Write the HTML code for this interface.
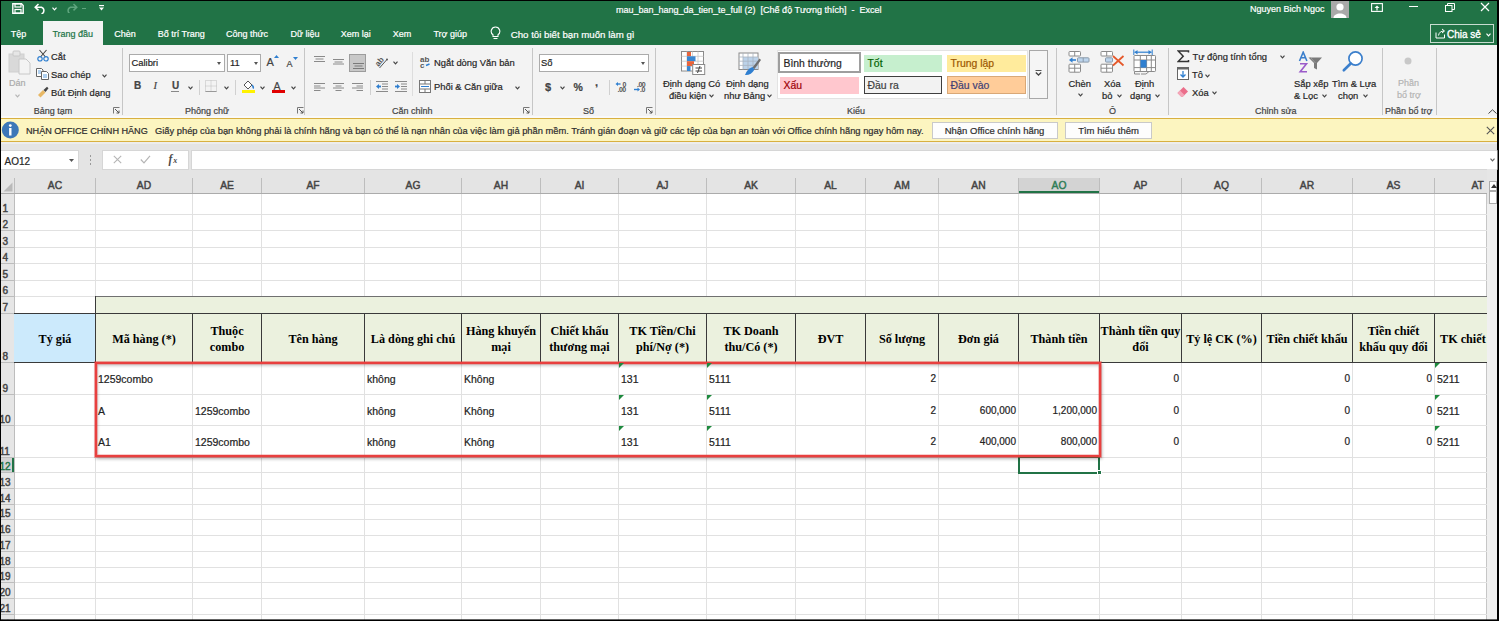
<!DOCTYPE html><html><head><meta charset="utf-8"><style>
*{margin:0;padding:0;box-sizing:border-box}
html,body{width:1499px;height:621px;overflow:hidden;background:#000}
body{position:relative;font-family:"Liberation Sans",sans-serif;color:#262626}
div,svg{position:absolute}
.t{white-space:nowrap;line-height:1;-webkit-text-stroke:0.2px currentColor}
</style></head><body>
<div style="left:1px;top:1px;width:1496px;height:618px;background:#F3F3F3"></div>
<div style="left:1px;top:1px;width:1496px;height:44px;background:#217346"></div>
<svg style="left:12px;top:3px;" width="12" height="11" viewBox="0 0 12 11"><path d="M0.8 0.8 H9.5 L11.2 2.5 V10.2 H0.8 Z" fill="none" stroke="#fff" stroke-width="1.4"/><rect x="3" y="0.8" width="6" height="3.2" fill="none" stroke="#fff" stroke-width="1.2"/><rect x="3" y="6.5" width="6" height="3.7" fill="none" stroke="#fff" stroke-width="1.2"/></svg>
<svg style="left:34px;top:3px;" width="13" height="11" viewBox="0 0 13 11"><path d="M4.5 1 L1.2 4.2 L4.5 7.4 M1.5 4.2 H7.5 A3.6 3.6 0 0 1 7.5 11" fill="none" stroke="#fff" stroke-width="1.5"/></svg>
<svg style="left:51.5px;top:6.5px;" width="5" height="4" viewBox="0 0 5 4"><path d="M0.5 0.7 L2.5 2.8 L4.5 0.7" fill="none" stroke="#fff" stroke-width="1.2"/></svg>
<svg style="left:65px;top:3px;" width="13" height="10" viewBox="0 0 13 10"><path d="M8.5 1 L11.8 4.2 L8.5 7.4 M11.5 4.2 H5.5 A3.6 3.6 0 0 0 5.5 11" fill="none" stroke="#5FA57E" stroke-width="1.5"/></svg>
<div style="left:82px;top:8px;width:4px;height:1px;background:#5FA57E"></div>
<svg style="left:99px;top:5px;" width="5" height="6" viewBox="0 0 5 6"><rect x="0" y="0" width="5" height="1.2" fill="#fff"/><path d="M0 2.6 H5 L2.5 5.4 Z" fill="#fff"/></svg>
<div class="t" style="left:616px;top:6.30px;font-size:9px;color:#fff;font-weight:normal;font-family:'Liberation Sans',sans-serif;">mau_ban_hang_da_tien_te_full (2)&nbsp; [Chế độ Tương thích]&nbsp; -&nbsp; Excel</div>
<div class="t" style="left:1250px;top:5.10px;font-size:9px;color:#fff;font-weight:normal;font-family:'Liberation Sans',sans-serif;">Nguyen Bich Ngoc</div>
<div style="left:1331px;top:1px;width:18px;height:16.5px;background:#A9A9A9;overflow:hidden"><svg style="left:0;top:0" width="18" height="17"><circle cx="9" cy="6" r="3.6" fill="#fff"/><path d="M2.5 17 C2.5 11 15.5 11 15.5 17 Z" fill="#fff"/></svg></div>
<svg style="left:1371px;top:3px;" width="12" height="9" viewBox="0 0 12 9"><rect x="0.6" y="0.6" width="10.8" height="7.8" fill="none" stroke="#fff" stroke-width="1.1"/><path d="M6 2.5 L3.5 5 H8.5 Z" fill="#fff"/><rect x="5.4" y="4.5" width="1.2" height="3" fill="#fff"/></svg>
<div style="left:1409px;top:6px;width:9px;height:1px;background:#fff"></div>
<svg style="left:1445px;top:3px;" width="10" height="9" viewBox="0 0 10 9"><rect x="0.5" y="2.5" width="6.5" height="6" fill="none" stroke="#fff" stroke-width="1"/><path d="M2.5 2.5 V0.5 H9.5 V6.5 H7" fill="none" stroke="#fff" stroke-width="1"/></svg>
<svg style="left:1480px;top:2px;" width="10" height="10" viewBox="0 0 10 10"><path d="M1 1 L9 9 M9 1 L1 9" stroke="#fff" stroke-width="1.2"/></svg>
<div style="left:43px;top:21px;width:60px;height:24px;background:#F3F3F3"></div>
<div class="t" style="left:10.7px;top:30.30px;font-size:9px;color:#fff;font-weight:normal;font-family:'Liberation Sans',sans-serif;">Tệp</div>
<div class="t" style="left:52.4px;top:30.30px;font-size:9px;color:#217346;font-weight:normal;font-family:'Liberation Sans',sans-serif;">Trang đầu</div>
<div class="t" style="left:114.3px;top:30.30px;font-size:9px;color:#fff;font-weight:normal;font-family:'Liberation Sans',sans-serif;">Chèn</div>
<div class="t" style="left:157.7px;top:30.30px;font-size:9px;color:#fff;font-weight:normal;font-family:'Liberation Sans',sans-serif;">Bố trí Trang</div>
<div class="t" style="left:226px;top:30.30px;font-size:9px;color:#fff;font-weight:normal;font-family:'Liberation Sans',sans-serif;">Công thức</div>
<div class="t" style="left:290.6px;top:30.30px;font-size:9px;color:#fff;font-weight:normal;font-family:'Liberation Sans',sans-serif;">Dữ liệu</div>
<div class="t" style="left:340.8px;top:30.30px;font-size:9px;color:#fff;font-weight:normal;font-family:'Liberation Sans',sans-serif;">Xem lại</div>
<div class="t" style="left:392.8px;top:30.30px;font-size:9px;color:#fff;font-weight:normal;font-family:'Liberation Sans',sans-serif;">Xem</div>
<div class="t" style="left:433.4px;top:30.30px;font-size:9px;color:#fff;font-weight:normal;font-family:'Liberation Sans',sans-serif;">Trợ giúp</div>
<div class="t" style="left:510.7px;top:30.09px;font-size:9.7px;color:#fff;font-weight:normal;font-family:'Liberation Sans',sans-serif;">Cho tôi biết bạn muốn làm gì</div>
<svg style="left:490px;top:26px;" width="11" height="14" viewBox="0 0 11 14"><path d="M5.5 1 A4.3 4.3 0 0 1 8 8.8 V10.5 H3 V8.8 A4.3 4.3 0 0 1 5.5 1 Z" fill="none" stroke="#fff" stroke-width="1.1"/><path d="M3.5 12.5 H7.5" stroke="#fff" stroke-width="1.1"/></svg>
<div style="left:1430px;top:24px;width:64px;height:19px;border:1px solid #C8DCD0"></div>
<svg style="left:1435px;top:28px;" width="11" height="11" viewBox="0 0 11 11"><path d="M1 4.5 V10 H9.5 V6.5" fill="none" stroke="#fff" stroke-width="1"/><path d="M3.5 7.5 C4 4.5 6 3 9 3 M7 1 L9.5 3 L7 5" fill="none" stroke="#fff" stroke-width="1"/></svg>
<div class="t" style="left:1447px;top:29.80px;font-size:10px;color:#fff;font-weight:normal;font-family:'Liberation Sans',sans-serif;-webkit-text-stroke:0.35px currentColor">Chia sẻ</div>
<svg style="left:1486.0px;top:32.5px;" width="5" height="4" viewBox="0 0 5 4"><path d="M0.5 0.7 L2.5 2.8 L4.5 0.7" fill="none" stroke="#fff" stroke-width="1.2"/></svg>
<div style="left:122px;top:48px;width:1px;height:67px;background:#C6C6C6"></div>
<div style="left:304px;top:48px;width:1px;height:67px;background:#C6C6C6"></div>
<div style="left:532px;top:48px;width:1px;height:67px;background:#C6C6C6"></div>
<div style="left:655px;top:48px;width:1px;height:67px;background:#C6C6C6"></div>
<div style="left:1056px;top:48px;width:1px;height:67px;background:#C6C6C6"></div>
<div style="left:1168px;top:48px;width:1px;height:67px;background:#C6C6C6"></div>
<div style="left:1382px;top:48px;width:1px;height:67px;background:#C6C6C6"></div>
<div style="left:1436px;top:48px;width:1px;height:67px;background:#C6C6C6"></div>
<div class="t" style="left:33.8px;top:107.10px;font-size:9px;color:#444;font-weight:normal;font-family:'Liberation Sans',sans-serif;">Bảng tạm</div>
<div class="t" style="left:185px;top:107.10px;font-size:9px;color:#444;font-weight:normal;font-family:'Liberation Sans',sans-serif;">Phông chữ</div>
<div class="t" style="left:392px;top:107.10px;font-size:9px;color:#444;font-weight:normal;font-family:'Liberation Sans',sans-serif;">Căn chỉnh</div>
<div class="t" style="left:583px;top:107.10px;font-size:9px;color:#444;font-weight:normal;font-family:'Liberation Sans',sans-serif;">Số</div>
<div class="t" style="left:847px;top:107.10px;font-size:9px;color:#444;font-weight:normal;font-family:'Liberation Sans',sans-serif;">Kiểu</div>
<div class="t" style="left:1109px;top:107.10px;font-size:9px;color:#444;font-weight:normal;font-family:'Liberation Sans',sans-serif;">Ô</div>
<div class="t" style="left:1255px;top:107.10px;font-size:9px;color:#444;font-weight:normal;font-family:'Liberation Sans',sans-serif;">Chỉnh sửa</div>
<div class="t" style="left:1385px;top:107.10px;font-size:9px;color:#444;font-weight:normal;font-family:'Liberation Sans',sans-serif;">Phần bổ trợ</div>
<svg style="left:113px;top:107px;" width="7" height="7" viewBox="0 0 7 7"><path d="M0.5 6.5 V0.5 H6.5" fill="none" stroke="#777" stroke-width="1"/><path d="M2 2 L6 6 M6 3.5 V6 H3.5" fill="none" stroke="#555" stroke-width="1"/></svg>
<svg style="left:297px;top:107px;" width="7" height="7" viewBox="0 0 7 7"><path d="M0.5 6.5 V0.5 H6.5" fill="none" stroke="#777" stroke-width="1"/><path d="M2 2 L6 6 M6 3.5 V6 H3.5" fill="none" stroke="#555" stroke-width="1"/></svg>
<svg style="left:523px;top:107px;" width="7" height="7" viewBox="0 0 7 7"><path d="M0.5 6.5 V0.5 H6.5" fill="none" stroke="#777" stroke-width="1"/><path d="M2 2 L6 6 M6 3.5 V6 H3.5" fill="none" stroke="#555" stroke-width="1"/></svg>
<svg style="left:646px;top:107px;" width="7" height="7" viewBox="0 0 7 7"><path d="M0.5 6.5 V0.5 H6.5" fill="none" stroke="#777" stroke-width="1"/><path d="M2 2 L6 6 M6 3.5 V6 H3.5" fill="none" stroke="#555" stroke-width="1"/></svg>
<svg style="left:8px;top:50px;" width="24" height="25" viewBox="0 0 24 25"><rect x="1" y="4" width="15" height="18" fill="#D9D9D9" stroke="#CFCFCF"/><rect x="5" y="1" width="7" height="5" rx="1" fill="#E6E6E6" stroke="#C8C8C8"/><path d="M11 9 H18 L22 13 V24 H11 Z" fill="#F3F3F3" stroke="#C8C8C8"/></svg>
<div class="t" style="left:9px;top:78.80px;font-size:9px;color:#ABABAB;font-weight:normal;font-family:'Liberation Sans',sans-serif;">Dán</div>
<svg style="left:15.0px;top:93.5px;" width="5" height="4" viewBox="0 0 5 4"><path d="M0.5 0.7 L2.5 2.8 L4.5 0.7" fill="none" stroke="#B5B5B5" stroke-width="1.2"/></svg>
<svg style="left:37px;top:49px;" width="12" height="13" viewBox="0 0 12 13"><path d="M2.5 1 L8.5 8 M9.5 1 L3.5 8" stroke="#444" stroke-width="1.1"/><circle cx="3" cy="9.8" r="2.2" fill="none" stroke="#2F7FD0" stroke-width="1.2"/><circle cx="9" cy="9.8" r="2.2" fill="none" stroke="#2F7FD0" stroke-width="1.2"/></svg>
<div class="t" style="left:51px;top:52.38px;font-size:9.4px;color:#262626;font-weight:normal;font-family:'Liberation Sans',sans-serif;">Cắt</div>
<svg style="left:36px;top:68px;" width="13" height="12" viewBox="0 0 13 12"><path d="M0.5 0.5 H5.5 L7 2 V8.5 H0.5 Z" fill="#fff" stroke="#666"/><path d="M5.5 3.5 H10.5 L12.5 5.5 V11.5 H5.5 Z" fill="#fff" stroke="#666"/><path d="M2 3 H5 M2 5 H5 M7 7 H11 M7 9 H11" stroke="#3B8AD8" stroke-width="0.8"/></svg>
<div class="t" style="left:51px;top:70.38px;font-size:9.4px;color:#262626;font-weight:normal;font-family:'Liberation Sans',sans-serif;">Sao chép</div>
<svg style="left:101.5px;top:73.5px;" width="5" height="4" viewBox="0 0 5 4"><path d="M0.5 0.7 L2.5 2.8 L4.5 0.7" fill="none" stroke="#444" stroke-width="1.2"/></svg>
<svg style="left:37px;top:86px;" width="12" height="12" viewBox="0 0 12 12"><path d="M1 9 L6 4 L8.5 6.5 L3.5 11.5 Z" fill="#E8B865"/><path d="M6.5 4 L10 0.8 L11.5 2.3 L8.5 6" fill="#444"/></svg>
<div class="t" style="left:51px;top:88.38px;font-size:9.4px;color:#262626;font-weight:normal;font-family:'Liberation Sans',sans-serif;">Bút Định dạng</div>
<div style="left:129px;top:53.5px;width:96px;height:18px;background:#fff;border:1px solid #ABABAB"></div>
<div class="t" style="left:131.5px;top:58.48px;font-size:9.4px;color:#262626;font-weight:normal;font-family:'Liberation Sans',sans-serif;">Calibri</div>
<svg style="left:217px;top:62px;" width="4" height="3" viewBox="0 0 4 3"><path d="M0 0 L4 0 L2.0 3 Z" fill="#555"/></svg>
<div style="left:227px;top:53.5px;width:34px;height:18px;background:#fff;border:1px solid #ABABAB"></div>
<div class="t" style="left:230px;top:58.48px;font-size:9.4px;color:#262626;font-weight:normal;font-family:'Liberation Sans',sans-serif;">11</div>
<svg style="left:254px;top:62px;" width="4" height="3" viewBox="0 0 4 3"><path d="M0 0 L4 0 L2.0 3 Z" fill="#555"/></svg>
<div class="t" style="left:266.5px;top:57.20px;font-size:11px;color:#444;font-weight:normal;font-family:'Liberation Sans',sans-serif;">A</div>
<svg style="left:274px;top:55px;" width="5" height="3" viewBox="0 0 5 3"><path d="M0 3 L2.5 0 L5 3 Z" fill="#2F7FD0"/></svg>
<div class="t" style="left:286.5px;top:59.60px;font-size:9px;color:#444;font-weight:normal;font-family:'Liberation Sans',sans-serif;">A</div>
<svg style="left:293px;top:57px;" width="5" height="3" viewBox="0 0 5 3"><path d="M0 0 L2.5 3 L5 0 Z" fill="#2F7FD0"/></svg>
<div class="t" style="left:134px;top:81.30px;font-size:10px;color:#444;font-weight:bold;font-family:'Liberation Sans',sans-serif;">B</div>
<div class="t" style="left:153.5px;top:81.15px;font-size:10.5px;color:#444;font-weight:normal;font-family:'Liberation Serif',serif;"><i>I</i></div>
<div class="t" style="left:172px;top:80.80px;font-size:10px;color:#444;font-weight:bold;font-family:'Liberation Sans',sans-serif;">U</div>
<div style="left:171px;top:91px;width:8px;height:1px;background:#888"></div>
<svg style="left:187.5px;top:85.5px;" width="5" height="4" viewBox="0 0 5 4"><path d="M0.5 0.7 L2.5 2.8 L4.5 0.7" fill="none" stroke="#444" stroke-width="1.2"/></svg>
<div style="left:199px;top:80px;width:1px;height:15px;background:#D0D0D0"></div>
<svg style="left:205px;top:80px;" width="12" height="12" viewBox="0 0 12 12"><rect x="0.5" y="0.5" width="11" height="11" fill="none" stroke="#BDBDBD" stroke-dasharray="1 1"/><path d="M6 0.5 V11.5 M0.5 6 H11.5" stroke="#BDBDBD" stroke-dasharray="1 1"/><path d="M0.5 11.5 H11.5" stroke="#999"/></svg>
<svg style="left:223.5px;top:85.5px;" width="5" height="4" viewBox="0 0 5 4"><path d="M0.5 0.7 L2.5 2.8 L4.5 0.7" fill="none" stroke="#444" stroke-width="1.2"/></svg>
<div style="left:235px;top:80px;width:1px;height:15px;background:#D0D0D0"></div>
<svg style="left:241px;top:79px;" width="15" height="14" viewBox="0 0 15 14"><path d="M3 6 L7 2 L11 6 L7 10 Z" fill="#fff" stroke="#555"/><path d="M11 6 Q13 8 12 9.5" fill="none" stroke="#2F7FD0" stroke-width="1.5"/><rect x="1" y="11" width="13" height="3" fill="#FFF200"/></svg>
<svg style="left:259.5px;top:85.5px;" width="5" height="4" viewBox="0 0 5 4"><path d="M0.5 0.7 L2.5 2.8 L4.5 0.7" fill="none" stroke="#444" stroke-width="1.2"/></svg>
<div class="t" style="left:273.5px;top:81.35px;font-size:10.5px;color:#444;font-weight:normal;font-family:'Liberation Sans',sans-serif;">A</div>
<div style="left:272px;top:90px;width:13px;height:2.7px;background:#E00000"></div>
<svg style="left:290.5px;top:85.5px;" width="5" height="4" viewBox="0 0 5 4"><path d="M0.5 0.7 L2.5 2.8 L4.5 0.7" fill="none" stroke="#444" stroke-width="1.2"/></svg>
<svg style="left:314px;top:55px;" width="12" height="8" viewBox="0 0 12 8"><path d="M0 1.5 H11" stroke="#8A8A8A"/><path d="M1.5 4.0 H9.5" stroke="#8A8A8A"/><path d="M0 6.5 H11" stroke="#8A8A8A"/></svg>
<svg style="left:333px;top:58px;" width="12" height="8" viewBox="0 0 12 8"><path d="M0 1.5 H11" stroke="#8A8A8A"/><path d="M1.5 4.0 H9.5" stroke="#8A8A8A"/><path d="M0 6.0 H11" stroke="#8A8A8A"/></svg>
<div style="left:349px;top:53.7px;width:17px;height:18.2px;background:#C8C8C8;border:1px solid #9C9C9C"></div>
<svg style="left:352.5px;top:62px;" width="12" height="8" viewBox="0 0 12 8"><path d="M0 1.5 H11" stroke="#7A7A7A"/><path d="M1.5 4.0 H9.5" stroke="#7A7A7A"/><path d="M0 6.5 H11" stroke="#7A7A7A"/></svg>
<svg style="left:375px;top:55px;" width="15" height="15" viewBox="0 0 15 15"><text x="0" y="0" font-size="8" font-weight="bold" font-family="Liberation Sans" fill="#555" transform="translate(3.5 12) rotate(-50)">ab</text><path d="M4.5 13 L11.5 5" stroke="#555" stroke-width="1"/><circle cx="12" cy="4.5" r="1" fill="#555"/></svg>
<svg style="left:392.5px;top:60.5px;" width="5" height="4" viewBox="0 0 5 4"><path d="M0.5 0.7 L2.5 2.8 L4.5 0.7" fill="none" stroke="#444" stroke-width="1.2"/></svg>
<div style="left:412px;top:52px;width:1px;height:44px;background:#DDDDDD"></div>
<svg style="left:419px;top:55px;" width="14" height="14" viewBox="0 0 14 14"><text x="1" y="7" font-size="8" font-weight="bold" font-family="Liberation Sans" fill="#555">ab</text><text x="1" y="13" font-size="8" font-weight="bold" font-family="Liberation Sans" fill="#555">c</text><path d="M7 10.5 L10.5 9" stroke="#2F7FD0" stroke-width="1.6"/></svg>
<div class="t" style="left:434px;top:57.78px;font-size:9.4px;color:#262626;font-weight:normal;font-family:'Liberation Sans',sans-serif;">Ngắt dòng Văn bản</div>
<svg style="left:314px;top:82px;" width="12" height="10" viewBox="0 0 12 10"><path d="M0 1.5 H11" stroke="#8A8A8A"/><path d="M0 4.0 H6.5" stroke="#8A8A8A"/><path d="M0 6.0 H11" stroke="#8A8A8A"/><path d="M0 8.5 H6.5" stroke="#8A8A8A"/></svg>
<svg style="left:333px;top:82px;" width="12" height="10" viewBox="0 0 12 10"><path d="M0 1.5 H11" stroke="#8A8A8A"/><path d="M2.5 4.0 H8.5" stroke="#8A8A8A"/><path d="M0 6.0 H11" stroke="#8A8A8A"/><path d="M2.5 8.5 H8.5" stroke="#8A8A8A"/></svg>
<svg style="left:352px;top:82px;" width="12" height="10" viewBox="0 0 12 10"><path d="M0 1.5 H11" stroke="#8A8A8A"/><path d="M4.5 4.0 H11" stroke="#8A8A8A"/><path d="M0 6.0 H11" stroke="#8A8A8A"/><path d="M4.5 8.5 H11" stroke="#8A8A8A"/></svg>
<div style="left:370px;top:80px;width:1px;height:15px;background:#D0D0D0"></div>
<svg style="left:376px;top:81px;" width="13" height="11" viewBox="0 0 13 11"><path d="M0 0.5 H12 M6 3 H12 M6 5.5 H12 M6 8 H12 M0 10.5 H12" stroke="#8A8A8A"/><path d="M0 5.5 L3 3 V8 Z" fill="#2F7FD0"/><rect x="2.5" y="4.6" width="2.5" height="1.8" fill="#2F7FD0"/></svg>
<svg style="left:394.5px;top:81px;" width="13" height="11" viewBox="0 0 13 11"><path d="M0 0.5 H12 M6 3 H12 M6 5.5 H12 M6 8 H12 M0 10.5 H12" stroke="#8A8A8A"/><path d="M5 5.5 L2 3 V8 Z" fill="#2F7FD0"/><rect x="0" y="4.6" width="2.5" height="1.8" fill="#2F7FD0"/></svg>
<svg style="left:419px;top:80px;" width="13" height="13" viewBox="0 0 13 13"><rect x="0.5" y="0.5" width="11" height="12" fill="#fff" stroke="#777"/><path d="M0.5 4 H11.5 M0.5 9 H11.5 M6 0.5 V4 M6 9 V12.5" stroke="#777"/><path d="M2 6.5 H10" stroke="#2F7FD0"/></svg>
<div class="t" style="left:434px;top:82.08px;font-size:9.4px;color:#262626;font-weight:normal;font-family:'Liberation Sans',sans-serif;">Phối &amp; Căn giữa</div>
<svg style="left:514.5px;top:85.5px;" width="5" height="4" viewBox="0 0 5 4"><path d="M0.5 0.7 L2.5 2.8 L4.5 0.7" fill="none" stroke="#444" stroke-width="1.2"/></svg>
<div style="left:539px;top:54px;width:110px;height:17.5px;background:#fff;border:1px solid #ABABAB"></div>
<div class="t" style="left:541px;top:58.48px;font-size:9.4px;color:#262626;font-weight:normal;font-family:'Liberation Sans',sans-serif;">Số</div>
<svg style="left:641px;top:62px;" width="4" height="3" viewBox="0 0 4 3"><path d="M0 0 L4 0 L2.0 3 Z" fill="#555"/></svg>
<div class="t" style="left:545px;top:81.90px;font-size:11px;color:#444;font-weight:bold;font-family:'Liberation Sans',sans-serif;">$</div>
<svg style="left:559.5px;top:85.5px;" width="5" height="4" viewBox="0 0 5 4"><path d="M0.5 0.7 L2.5 2.8 L4.5 0.7" fill="none" stroke="#444" stroke-width="1.2"/></svg>
<div class="t" style="left:573.5px;top:82.05px;font-size:10.5px;color:#444;font-weight:bold;font-family:'Liberation Sans',sans-serif;">%</div>
<div class="t" style="left:595px;top:77.20px;font-size:11px;color:#444;font-weight:bold;font-family:'Liberation Sans',sans-serif;">,</div>
<div style="left:609px;top:80px;width:1px;height:15px;background:#D0D0D0"></div>
<svg style="left:614px;top:79px;" width="15" height="14" viewBox="0 0 15 14"><path d="M6.5 5 H3" stroke="#2F7FD0" stroke-width="1.4"/><path d="M1.5 5 L4 3 V7 Z" fill="#2F7FD0"/><text x="8.5" y="7.5" font-size="7" font-weight="bold" font-family="Liberation Sans" fill="#555">0</text><text x="3.5" y="13" font-size="7" font-weight="bold" font-family="Liberation Sans" fill="#555" letter-spacing="-0.5">.00</text></svg>
<svg style="left:633px;top:79px;" width="15" height="14" viewBox="0 0 15 14"><text x="4" y="7.5" font-size="7" font-weight="bold" font-family="Liberation Sans" fill="#555" letter-spacing="-0.5">.00</text><path d="M1 10.5 H5" stroke="#2F7FD0" stroke-width="1.4"/><path d="M7 10.5 L4.5 8.5 V12.5 Z" fill="#2F7FD0"/><text x="7" y="13" font-size="7" font-weight="bold" font-family="Liberation Sans" fill="#555" letter-spacing="-0.5">.0</text></svg>
<svg style="left:680px;top:50px;" width="26" height="26" viewBox="0 0 26 26"><rect x="1.5" y="1.5" width="22" height="19.5" fill="#fff" stroke="#8A8A8A"/><path d="M1.5 6.3 H23.5 M1.5 11.2 H23.5 M1.5 16.1 H23.5 M7 1.5 V21 M12.5 1.5 V21 M18 1.5 V21" stroke="#C8C8C8" stroke-width="0.8"/><rect x="7" y="2" width="4" height="4.3" fill="#E8643C"/><rect x="7" y="6.3" width="8.5" height="4.9" fill="#3A86D0"/><rect x="7" y="11.2" width="7" height="4.9" fill="#E8643C"/><rect x="7" y="16.1" width="3.5" height="4.9" fill="#3A86D0"/><rect x="12.7" y="14.5" width="12" height="10" fill="#fff" stroke="#8A8A8A"/><path d="M15.5 18 H22 M15.5 21 H22 M17.5 23 L20 16" stroke="#444" stroke-width="1"/></svg>
<div class="t" style="left:663px;top:79.18px;font-size:9.4px;color:#262626;font-weight:normal;font-family:'Liberation Sans',sans-serif;">Định dạng Có</div>
<div class="t" style="left:669px;top:91.18px;font-size:9.4px;color:#262626;font-weight:normal;font-family:'Liberation Sans',sans-serif;">điều kiện</div>
<svg style="left:708.5px;top:93.5px;" width="5" height="4" viewBox="0 0 5 4"><path d="M0.5 0.7 L2.5 2.8 L4.5 0.7" fill="none" stroke="#444" stroke-width="1.2"/></svg>
<svg style="left:738px;top:52px;" width="24" height="25" viewBox="0 0 24 25"><rect x="1" y="1" width="19" height="16.5" fill="#fff" stroke="#8A8A8A"/><rect x="5" y="5" width="15" height="12" fill="#BCD3EA"/><path d="M1 5 H20 M1 9.2 H20 M1 13.4 H20 M5 1 V17.5 M10 1 V17.5 M15 1 V17.5" stroke="#A8B4C0" stroke-width="0.8"/><path d="M14.5 15.5 L21.5 6.5 L23 8 L16.5 17 Z" fill="#6E6E6E"/><path d="M7 23 Q9 17 14.5 15 L16.5 17.5 Q13 23.5 7 23 Z" fill="#2F7FD0"/></svg>
<div class="t" style="left:726px;top:79.18px;font-size:9.4px;color:#262626;font-weight:normal;font-family:'Liberation Sans',sans-serif;">Định dạng</div>
<div class="t" style="left:724px;top:91.18px;font-size:9.4px;color:#262626;font-weight:normal;font-family:'Liberation Sans',sans-serif;">như Bảng</div>
<svg style="left:766.5px;top:93.5px;" width="5" height="4" viewBox="0 0 5 4"><path d="M0.5 0.7 L2.5 2.8 L4.5 0.7" fill="none" stroke="#444" stroke-width="1.2"/></svg>
<div style="left:777px;top:49.5px;width:251px;height:49px;background:#fff;border:1px solid #E3E3E3"></div>
<div style="left:778px;top:52px;width:83px;height:21px;background:#fff;border:2px solid #9E9E9E"></div>
<div class="t" style="left:783.5px;top:59.38px;font-size:10.4px;color:#262626;font-weight:normal;font-family:'Liberation Sans',sans-serif;">Bình thường</div>
<div style="left:864px;top:54.5px;width:78px;height:17px;background:#C6EFCE"></div>
<div class="t" style="left:867.5px;top:59.38px;font-size:10.4px;color:#006100;font-weight:normal;font-family:'Liberation Sans',sans-serif;">Tốt</div>
<div style="left:947px;top:54.5px;width:79px;height:17px;background:#FFEB9C"></div>
<div class="t" style="left:950.5px;top:59.38px;font-size:10.4px;color:#9C5700;font-weight:normal;font-family:'Liberation Sans',sans-serif;">Trung lập</div>
<div style="left:780px;top:76.5px;width:79px;height:17px;background:#FFC7CE"></div>
<div class="t" style="left:783.5px;top:80.88px;font-size:10.4px;color:#9C0006;font-weight:normal;font-family:'Liberation Sans',sans-serif;">Xấu</div>
<div style="left:864px;top:76px;width:78px;height:18px;background:#F2F2F2;border:1px solid #3F3F3F"></div>
<div class="t" style="left:867.5px;top:80.88px;font-size:10.4px;color:#3F3F3F;font-weight:normal;font-family:'Liberation Sans',sans-serif;">Đầu ra</div>
<div style="left:947px;top:76px;width:79px;height:18px;background:#FFCC99;border:1px solid #D9A877"></div>
<div class="t" style="left:950.5px;top:80.88px;font-size:10.4px;color:#3F3F76;font-weight:normal;font-family:'Liberation Sans',sans-serif;">Đầu vào</div>
<div style="left:1028.5px;top:49.5px;width:19px;height:49px;background:#F5F5F5;border:1px solid #A8A8A8"></div>
<svg style="left:1034.5px;top:70px;" width="7" height="6" viewBox="0 0 7 6"><path d="M0.5 0.5 H6.5" stroke="#555"/><path d="M0.8 2.5 L3.5 5 L6.2 2.5" fill="none" stroke="#444" stroke-width="1.3"/></svg>
<svg style="left:1068px;top:50px;" width="22" height="23" viewBox="0 0 22 23"><rect x="1" y="1.5" width="11.5" height="4.5" rx="0.8" fill="#fff" stroke="#8A8A8A"/><path d="M6.7 1.5 V6" stroke="#8A8A8A"/><rect x="9.5" y="7.8" width="11.5" height="4.3" rx="0.8" fill="#BCD4EC" stroke="#8A9AAA"/><path d="M15.2 7.8 V12" stroke="#8A9AAA"/><path d="M8 10 H3.5" stroke="#2F7FD0" stroke-width="1.6"/><path d="M1 10 L4.5 7.3 V12.7 Z" fill="#2F7FD0"/><rect x="1" y="14.2" width="11.5" height="8" rx="0.8" fill="#fff" stroke="#8A8A8A"/><path d="M6.7 14.2 V22.2 M1 18.2 H12.5" stroke="#8A8A8A"/></svg>
<div class="t" style="left:1068.5px;top:79.18px;font-size:9.4px;color:#262626;font-weight:normal;font-family:'Liberation Sans',sans-serif;">Chèn</div>
<svg style="left:1077.5px;top:93.0px;" width="5" height="4" viewBox="0 0 5 4"><path d="M0.5 0.7 L2.5 2.8 L4.5 0.7" fill="none" stroke="#444" stroke-width="1.2"/></svg>
<svg style="left:1100px;top:50px;" width="25" height="23" viewBox="0 0 25 23"><rect x="1" y="1.5" width="11.5" height="4.5" rx="0.8" fill="#fff" stroke="#8A8A8A"/><path d="M6.7 1.5 V6" stroke="#8A8A8A"/><rect x="5.5" y="7.8" width="7" height="4.3" rx="0.8" fill="#BCD4EC" stroke="#8A9AAA"/><rect x="1" y="14.2" width="11.5" height="8" rx="0.8" fill="#fff" stroke="#8A8A8A"/><path d="M6.7 14.2 V22.2 M1 18.2 H12.5" stroke="#8A8A8A"/><path d="M13 6 L23.5 15.5 M23.5 6 L13 15.5" stroke="#E5582A" stroke-width="1.7"/></svg>
<div class="t" style="left:1104px;top:79.18px;font-size:9.4px;color:#262626;font-weight:normal;font-family:'Liberation Sans',sans-serif;">Xóa</div>
<div class="t" style="left:1102px;top:91.18px;font-size:9.4px;color:#262626;font-weight:normal;font-family:'Liberation Sans',sans-serif;">bỏ</div>
<svg style="left:1116.5px;top:93.5px;" width="5" height="4" viewBox="0 0 5 4"><path d="M0.5 0.7 L2.5 2.8 L4.5 0.7" fill="none" stroke="#444" stroke-width="1.2"/></svg>
<svg style="left:1133px;top:49px;" width="24" height="26" viewBox="0 0 24 26"><path d="M1.5 3.2 H18.5" stroke="#2F7FD0" stroke-width="1.2"/><path d="M1.5 3.2 L4.5 1 V5.4 Z M18.5 3.2 L15.5 1 V5.4 Z" fill="#2F7FD0"/><path d="M0.8 0.5 V6 M19.2 0.5 V6" stroke="#2F7FD0"/><rect x="1" y="6.5" width="21.5" height="16" rx="0.8" fill="#fff" stroke="#8A8A8A"/><path d="M7.3 6.5 V22.5 M13.6 6.5 V22.5 M18.3 6.5 V22.5 M1 11 H22.5 M1 18.6 H22.5" stroke="#8A8A8A"/><rect x="7.5" y="11" width="6" height="7.6" fill="#2F7FD0"/><path d="M1.5 22.5 V25 H7 M8 25 H13 L16 22.5" fill="none" stroke="#8A8A8A"/></svg>
<div class="t" style="left:1135px;top:79.18px;font-size:9.4px;color:#262626;font-weight:normal;font-family:'Liberation Sans',sans-serif;">Định</div>
<div class="t" style="left:1130px;top:91.18px;font-size:9.4px;color:#262626;font-weight:normal;font-family:'Liberation Sans',sans-serif;">dạng</div>
<svg style="left:1154.5px;top:93.5px;" width="5" height="4" viewBox="0 0 5 4"><path d="M0.5 0.7 L2.5 2.8 L4.5 0.7" fill="none" stroke="#444" stroke-width="1.2"/></svg>
<svg style="left:1177px;top:49.5px;" width="13" height="13" viewBox="0 0 13 13"><path d="M11.5 2.5 V1 H1.2 L6.2 6.2 L1.2 11.5 H11.5 V10" fill="none" stroke="#333" stroke-width="1.5"/></svg>
<div class="t" style="left:1192.5px;top:51.68px;font-size:9.4px;color:#262626;font-weight:normal;font-family:'Liberation Sans',sans-serif;">Tự động tính tổng</div>
<svg style="left:1279.5px;top:54.5px;" width="5" height="4" viewBox="0 0 5 4"><path d="M0.5 0.7 L2.5 2.8 L4.5 0.7" fill="none" stroke="#444" stroke-width="1.2"/></svg>
<svg style="left:1177px;top:67px;" width="12" height="13" viewBox="0 0 12 13"><rect x="0.5" y="0.5" width="11" height="12" fill="#fff" stroke="#666"/><rect x="0.5" y="0.5" width="11" height="2" fill="#666"/><path d="M6 4 V10 M3.5 7.5 L6 10 L8.5 7.5" fill="none" stroke="#2F7FD0" stroke-width="1.3"/></svg>
<div class="t" style="left:1192px;top:70.38px;font-size:9.4px;color:#262626;font-weight:normal;font-family:'Liberation Sans',sans-serif;">Tô</div>
<svg style="left:1205.0px;top:73.5px;" width="5" height="4" viewBox="0 0 5 4"><path d="M0.5 0.7 L2.5 2.8 L4.5 0.7" fill="none" stroke="#444" stroke-width="1.2"/></svg>
<svg style="left:1177px;top:86px;" width="12" height="11" viewBox="0 0 12 11"><path d="M0.5 7 L6.5 1 L11 5.5 L5 11.5 Z" fill="#EB6E8A"/><path d="M0.5 7 L3 4.5 L7.5 9 L5 11.5 Z" fill="#F4A7B9"/></svg>
<div class="t" style="left:1192px;top:88.18px;font-size:9.4px;color:#262626;font-weight:normal;font-family:'Liberation Sans',sans-serif;">Xóa</div>
<svg style="left:1211.5px;top:91.0px;" width="5" height="4" viewBox="0 0 5 4"><path d="M0.5 0.7 L2.5 2.8 L4.5 0.7" fill="none" stroke="#444" stroke-width="1.2"/></svg>
<svg style="left:1298px;top:51px;" width="26" height="23" viewBox="0 0 26 23"><path d="M1.5 10 L5.2 1.2 L8.9 10 M3 6.8 H7.4" fill="none" stroke="#3B7FCC" stroke-width="1.6"/><path d="M2 12.8 H8.5 L2.2 20.8 H9" fill="none" stroke="#9B5BC9" stroke-width="1.6"/><path d="M10.5 6.5 H24 L19 12 V18.5 L16 17 V12 Z" fill="#7A7A7A"/><path d="M12.5 6.5 L17.5 12" stroke="#9A9A9A"/></svg>
<div class="t" style="left:1294px;top:79.18px;font-size:9.4px;color:#262626;font-weight:normal;font-family:'Liberation Sans',sans-serif;">Sắp xếp</div>
<div class="t" style="left:1294px;top:91.18px;font-size:9.4px;color:#262626;font-weight:normal;font-family:'Liberation Sans',sans-serif;">&amp; Lọc</div>
<svg style="left:1321.5px;top:93.5px;" width="5" height="4" viewBox="0 0 5 4"><path d="M0.5 0.7 L2.5 2.8 L4.5 0.7" fill="none" stroke="#444" stroke-width="1.2"/></svg>
<svg style="left:1341px;top:50px;" width="23" height="23" viewBox="0 0 23 23"><circle cx="14.5" cy="8.5" r="6.6" fill="#fff" stroke="#3B7FCC" stroke-width="1.7"/><path d="M9.7 13.5 L2.8 20.3" stroke="#3B7FCC" stroke-width="2.6" stroke-linecap="round"/></svg>
<div class="t" style="left:1332px;top:79.18px;font-size:9.4px;color:#262626;font-weight:normal;font-family:'Liberation Sans',sans-serif;">Tìm &amp; Lựa</div>
<div class="t" style="left:1338px;top:91.18px;font-size:9.4px;color:#262626;font-weight:normal;font-family:'Liberation Sans',sans-serif;">chọn</div>
<svg style="left:1362.5px;top:93.5px;" width="5" height="4" viewBox="0 0 5 4"><path d="M0.5 0.7 L2.5 2.8 L4.5 0.7" fill="none" stroke="#444" stroke-width="1.2"/></svg>
<svg style="left:1403px;top:56px;" width="10" height="10" viewBox="0 0 10 10"><circle cx="5" cy="5" r="3.5" fill="#C8C8C8"/></svg>
<div class="t" style="left:1398px;top:79.30px;font-size:9px;color:#B4B4B4;font-weight:normal;font-family:'Liberation Sans',sans-serif;">Phần</div>
<div class="t" style="left:1397px;top:91.30px;font-size:9px;color:#B4B4B4;font-weight:normal;font-family:'Liberation Sans',sans-serif;">bổ trợ</div>
<svg style="left:1488px;top:109px;" width="9" height="5" viewBox="0 0 9 5"><path d="M0.5 4.5 L4.5 0.8 L8.5 4.5" fill="none" stroke="#444" stroke-width="1"/></svg>
<div style="left:1px;top:116px;width:1496px;height:2px;background:#F9F9F9"></div>
<div style="left:1px;top:117.5px;width:1496px;height:24px;background:#FCF5C0;border-top:1.5px solid #D8B040;border-bottom:1.5px solid #D8B040"></div>
<svg style="left:1px;top:121px;" width="19" height="18" viewBox="0 0 19 18"><circle cx="9.3" cy="9" r="8.5" fill="#3D78B8"/><rect x="8.1" y="7" width="2.4" height="7.5" fill="#fff"/><circle cx="9.3" cy="4.6" r="1.4" fill="#fff"/></svg>
<div class="t" style="left:26px;top:127.27px;font-size:9.1px;color:#2A2A2A;font-weight:normal;font-family:'Liberation Sans',sans-serif;">NHẬN OFFICE CHÍNH HÃNG</div>
<div class="t" style="left:155px;top:127.20px;font-size:9.33px;color:#2E2E2E;font-weight:normal;font-family:'Liberation Sans',sans-serif;">Giấy phép của bạn không phải là chính hãng và bạn có thể là nạn nhân của việc làm giả phần mềm. Tránh gián đoạn và giữ các tệp của bạn an toàn với Office chính hãng ngay hôm nay.</div>
<div style="left:932px;top:121.5px;width:125.5px;height:17px;background:#FDFDFD;border:1px solid #C9C9C9"></div>
<div class="t" style="left:894.5px;width:200px;text-align:center;top:125.75px;font-size:9.5px;color:#2E2E2E;font-weight:normal;font-family:'Liberation Sans',sans-serif;">Nhận Office chính hãng</div>
<div style="left:1065px;top:121.5px;width:87px;height:17px;background:#FDFDFD;border:1px solid #C9C9C9"></div>
<div class="t" style="left:1008.5px;width:200px;text-align:center;top:125.75px;font-size:9.5px;color:#2E2E2E;font-weight:normal;font-family:'Liberation Sans',sans-serif;">Tìm hiểu thêm</div>
<svg style="left:1486px;top:126px;" width="9" height="9" viewBox="0 0 9 9"><path d="M0.8 0.8 L8.2 8.2 M8.2 0.8 L0.8 8.2" stroke="#555" stroke-width="1.1"/></svg>
<div style="left:1px;top:141.5px;width:1496px;height:52px;background:#E4E4E4"></div>
<div style="left:1px;top:142px;width:1496px;height:1.5px;background:#EDEDED"></div>
<div style="left:1px;top:150px;width:78px;height:19.5px;background:#fff;border:1px solid #D6D6D6;border-left:none"></div>
<div class="t" style="left:4.5px;top:157.00px;font-size:10px;color:#262626;font-weight:normal;font-family:'Liberation Sans',sans-serif;">AO12</div>
<svg style="left:69px;top:159px;" width="5" height="3" viewBox="0 0 5 3"><path d="M0 0 L5 0 L2.5 3 Z" fill="#555"/></svg>
<div style="left:90px;top:155px;width:1px;height:2px;background:#9A9A9A"></div>
<div style="left:90px;top:159px;width:1px;height:2px;background:#9A9A9A"></div>
<div style="left:90px;top:163px;width:1px;height:2px;background:#9A9A9A"></div>
<div style="left:102px;top:150px;width:87px;height:19.5px;background:#fff;border:1px solid #D6D6D6"></div>
<svg style="left:113px;top:155px;" width="9" height="9" viewBox="0 0 9 9"><path d="M0.8 0.8 L8.2 8.2 M8.2 0.8 L0.8 8.2" stroke="#B5B5B5" stroke-width="1.1"/></svg>
<svg style="left:140px;top:155px;" width="11" height="9" viewBox="0 0 11 9"><path d="M0.8 4.5 L4 7.8 L10 0.8" fill="none" stroke="#B5B5B5" stroke-width="1.2"/></svg>
<svg style="left:167px;top:152px;" width="14" height="15" viewBox="0 0 14 15"><text x="1.5" y="10.8" font-size="11.5" font-weight="bold" font-style="italic" font-family="Liberation Serif" fill="#4A4A4A">f</text><text x="6.2" y="11" font-size="8" font-weight="bold" font-style="italic" font-family="Liberation Serif" fill="#4A4A4A">x</text></svg>
<div style="left:191px;top:150px;width:1310px;height:19.5px;background:#fff;border:1px solid #D6D6D6"></div>
<svg style="left:1490.0px;top:158.0px;" width="5" height="4" viewBox="0 0 5 4"><path d="M0.5 0.7 L2.5 2.8 L4.5 0.7" fill="none" stroke="#666" stroke-width="1.2"/></svg>
<div style="left:14px;top:193px;width:1473px;height:430px;background:#fff"></div>
<div style="left:1px;top:193px;width:13px;height:430px;background:#E6E6E6"></div>
<svg style="left:3px;top:182px;" width="10" height="10" viewBox="0 0 10 10"><path d="M9.5 0.5 V9.5 H0.5 Z" fill="#B9B9B9"/></svg>
<div class="t" style="left:-45.0px;width:200px;text-align:center;top:181.21px;font-size:10.3px;color:#444;font-weight:normal;font-family:'Liberation Sans',sans-serif;-webkit-text-stroke:0.45px currentColor">AC</div>
<div class="t" style="left:44.0px;width:200px;text-align:center;top:181.21px;font-size:10.3px;color:#444;font-weight:normal;font-family:'Liberation Sans',sans-serif;-webkit-text-stroke:0.45px currentColor">AD</div>
<div class="t" style="left:127.0px;width:200px;text-align:center;top:181.21px;font-size:10.3px;color:#444;font-weight:normal;font-family:'Liberation Sans',sans-serif;-webkit-text-stroke:0.45px currentColor">AE</div>
<div class="t" style="left:213.0px;width:200px;text-align:center;top:181.21px;font-size:10.3px;color:#444;font-weight:normal;font-family:'Liberation Sans',sans-serif;-webkit-text-stroke:0.45px currentColor">AF</div>
<div class="t" style="left:313.0px;width:200px;text-align:center;top:181.21px;font-size:10.3px;color:#444;font-weight:normal;font-family:'Liberation Sans',sans-serif;-webkit-text-stroke:0.45px currentColor">AG</div>
<div class="t" style="left:401.0px;width:200px;text-align:center;top:181.21px;font-size:10.3px;color:#444;font-weight:normal;font-family:'Liberation Sans',sans-serif;-webkit-text-stroke:0.45px currentColor">AH</div>
<div class="t" style="left:479.5px;width:200px;text-align:center;top:181.21px;font-size:10.3px;color:#444;font-weight:normal;font-family:'Liberation Sans',sans-serif;-webkit-text-stroke:0.45px currentColor">AI</div>
<div class="t" style="left:562.5px;width:200px;text-align:center;top:181.21px;font-size:10.3px;color:#444;font-weight:normal;font-family:'Liberation Sans',sans-serif;-webkit-text-stroke:0.45px currentColor">AJ</div>
<div class="t" style="left:651.0px;width:200px;text-align:center;top:181.21px;font-size:10.3px;color:#444;font-weight:normal;font-family:'Liberation Sans',sans-serif;-webkit-text-stroke:0.45px currentColor">AK</div>
<div class="t" style="left:730.5px;width:200px;text-align:center;top:181.21px;font-size:10.3px;color:#444;font-weight:normal;font-family:'Liberation Sans',sans-serif;-webkit-text-stroke:0.45px currentColor">AL</div>
<div class="t" style="left:802.0px;width:200px;text-align:center;top:181.21px;font-size:10.3px;color:#444;font-weight:normal;font-family:'Liberation Sans',sans-serif;-webkit-text-stroke:0.45px currentColor">AM</div>
<div class="t" style="left:878.5px;width:200px;text-align:center;top:181.21px;font-size:10.3px;color:#444;font-weight:normal;font-family:'Liberation Sans',sans-serif;-webkit-text-stroke:0.45px currentColor">AN</div>
<div style="left:1018px;top:178px;width:81px;height:15px;background:#D3D3D3"></div>
<div style="left:1018px;top:191px;width:82px;height:2px;background:#217346"></div>
<div class="t" style="left:959.0px;width:200px;text-align:center;top:181.21px;font-size:10.3px;color:#2F7D57;font-weight:normal;font-family:'Liberation Sans',sans-serif;-webkit-text-stroke:0.45px currentColor">AO</div>
<div class="t" style="left:1040.5px;width:200px;text-align:center;top:181.21px;font-size:10.3px;color:#444;font-weight:normal;font-family:'Liberation Sans',sans-serif;-webkit-text-stroke:0.45px currentColor">AP</div>
<div class="t" style="left:1121.5px;width:200px;text-align:center;top:181.21px;font-size:10.3px;color:#444;font-weight:normal;font-family:'Liberation Sans',sans-serif;-webkit-text-stroke:0.45px currentColor">AQ</div>
<div class="t" style="left:1207.0px;width:200px;text-align:center;top:181.21px;font-size:10.3px;color:#444;font-weight:normal;font-family:'Liberation Sans',sans-serif;-webkit-text-stroke:0.45px currentColor">AR</div>
<div class="t" style="left:1293.5px;width:200px;text-align:center;top:181.21px;font-size:10.3px;color:#444;font-weight:normal;font-family:'Liberation Sans',sans-serif;-webkit-text-stroke:0.45px currentColor">AS</div>
<div class="t" style="left:1471.5px;top:181.21px;font-size:10.3px;color:#444;font-weight:normal;font-family:'Liberation Sans',sans-serif;-webkit-text-stroke:0.45px currentColor">AT</div>
<div style="left:14px;top:178px;width:1px;height:15px;background:#BDBDBD"></div>
<div style="left:95px;top:178px;width:1px;height:15px;background:#BDBDBD"></div>
<div style="left:192px;top:178px;width:1px;height:15px;background:#BDBDBD"></div>
<div style="left:261px;top:178px;width:1px;height:15px;background:#BDBDBD"></div>
<div style="left:364px;top:178px;width:1px;height:15px;background:#BDBDBD"></div>
<div style="left:461px;top:178px;width:1px;height:15px;background:#BDBDBD"></div>
<div style="left:540px;top:178px;width:1px;height:15px;background:#BDBDBD"></div>
<div style="left:618px;top:178px;width:1px;height:15px;background:#BDBDBD"></div>
<div style="left:706px;top:178px;width:1px;height:15px;background:#BDBDBD"></div>
<div style="left:795px;top:178px;width:1px;height:15px;background:#BDBDBD"></div>
<div style="left:865px;top:178px;width:1px;height:15px;background:#BDBDBD"></div>
<div style="left:938px;top:178px;width:1px;height:15px;background:#BDBDBD"></div>
<div style="left:1018px;top:178px;width:1px;height:15px;background:#BDBDBD"></div>
<div style="left:1099px;top:178px;width:1px;height:15px;background:#BDBDBD"></div>
<div style="left:1181px;top:178px;width:1px;height:15px;background:#BDBDBD"></div>
<div style="left:1261px;top:178px;width:1px;height:15px;background:#BDBDBD"></div>
<div style="left:1352px;top:178px;width:1px;height:15px;background:#BDBDBD"></div>
<div style="left:1434px;top:178px;width:1px;height:15px;background:#BDBDBD"></div>
<div style="left:1px;top:193px;width:1486px;height:1px;background:#ABABAB"></div>
<div style="left:95px;top:194px;width:1px;height:427px;background:#E1E1E1"></div>
<div style="left:192px;top:194px;width:1px;height:427px;background:#E1E1E1"></div>
<div style="left:261px;top:194px;width:1px;height:427px;background:#E1E1E1"></div>
<div style="left:364px;top:194px;width:1px;height:427px;background:#E1E1E1"></div>
<div style="left:461px;top:194px;width:1px;height:427px;background:#E1E1E1"></div>
<div style="left:540px;top:194px;width:1px;height:427px;background:#E1E1E1"></div>
<div style="left:618px;top:194px;width:1px;height:427px;background:#E1E1E1"></div>
<div style="left:706px;top:194px;width:1px;height:427px;background:#E1E1E1"></div>
<div style="left:795px;top:194px;width:1px;height:427px;background:#E1E1E1"></div>
<div style="left:865px;top:194px;width:1px;height:427px;background:#E1E1E1"></div>
<div style="left:938px;top:194px;width:1px;height:427px;background:#E1E1E1"></div>
<div style="left:1018px;top:194px;width:1px;height:427px;background:#E1E1E1"></div>
<div style="left:1099px;top:194px;width:1px;height:427px;background:#E1E1E1"></div>
<div style="left:1181px;top:194px;width:1px;height:427px;background:#E1E1E1"></div>
<div style="left:1261px;top:194px;width:1px;height:427px;background:#E1E1E1"></div>
<div style="left:1352px;top:194px;width:1px;height:427px;background:#E1E1E1"></div>
<div style="left:1434px;top:194px;width:1px;height:427px;background:#E1E1E1"></div>
<div style="left:1486px;top:194px;width:1px;height:427px;background:#C6C6C6"></div>
<div style="left:14px;top:214px;width:1473px;height:1px;background:#E1E1E1"></div>
<div style="left:14px;top:230px;width:1473px;height:1px;background:#E1E1E1"></div>
<div style="left:14px;top:247px;width:1473px;height:1px;background:#E1E1E1"></div>
<div style="left:14px;top:263px;width:1473px;height:1px;background:#E1E1E1"></div>
<div style="left:14px;top:280px;width:1473px;height:1px;background:#E1E1E1"></div>
<div style="left:14px;top:296px;width:1473px;height:1px;background:#E1E1E1"></div>
<div style="left:14px;top:313px;width:1473px;height:1px;background:#E1E1E1"></div>
<div style="left:14px;top:362px;width:1473px;height:1px;background:#E1E1E1"></div>
<div style="left:14px;top:394px;width:1473px;height:1px;background:#E1E1E1"></div>
<div style="left:14px;top:425px;width:1473px;height:1px;background:#E1E1E1"></div>
<div style="left:14px;top:457px;width:1473px;height:1px;background:#E1E1E1"></div>
<div style="left:14px;top:472px;width:1473px;height:1px;background:#E1E1E1"></div>
<div style="left:14px;top:488px;width:1473px;height:1px;background:#E1E1E1"></div>
<div style="left:14px;top:504px;width:1473px;height:1px;background:#E1E1E1"></div>
<div style="left:14px;top:519px;width:1473px;height:1px;background:#E1E1E1"></div>
<div style="left:14px;top:535px;width:1473px;height:1px;background:#E1E1E1"></div>
<div style="left:14px;top:551px;width:1473px;height:1px;background:#E1E1E1"></div>
<div style="left:14px;top:567px;width:1473px;height:1px;background:#E1E1E1"></div>
<div style="left:14px;top:582px;width:1473px;height:1px;background:#E1E1E1"></div>
<div style="left:14px;top:598px;width:1473px;height:1px;background:#E1E1E1"></div>
<div style="left:14px;top:614px;width:1473px;height:1px;background:#E1E1E1"></div>
<div style="left:14px;top:630px;width:1473px;height:1px;background:#E1E1E1"></div>
<div style="left:1px;top:214px;width:13px;height:1px;background:#BDBDBD"></div>
<div class="t" style="left:2.5px;top:203.50px;font-size:10px;color:#444;font-weight:normal;font-family:'Liberation Sans',sans-serif;-webkit-text-stroke:0.45px currentColor">1</div>
<div style="left:1px;top:230px;width:13px;height:1px;background:#BDBDBD"></div>
<div class="t" style="left:2.5px;top:219.50px;font-size:10px;color:#444;font-weight:normal;font-family:'Liberation Sans',sans-serif;-webkit-text-stroke:0.45px currentColor">2</div>
<div style="left:1px;top:247px;width:13px;height:1px;background:#BDBDBD"></div>
<div class="t" style="left:2.5px;top:236.50px;font-size:10px;color:#444;font-weight:normal;font-family:'Liberation Sans',sans-serif;-webkit-text-stroke:0.45px currentColor">3</div>
<div style="left:1px;top:263px;width:13px;height:1px;background:#BDBDBD"></div>
<div class="t" style="left:2.5px;top:252.50px;font-size:10px;color:#444;font-weight:normal;font-family:'Liberation Sans',sans-serif;-webkit-text-stroke:0.45px currentColor">4</div>
<div style="left:1px;top:280px;width:13px;height:1px;background:#BDBDBD"></div>
<div class="t" style="left:2.5px;top:269.50px;font-size:10px;color:#444;font-weight:normal;font-family:'Liberation Sans',sans-serif;-webkit-text-stroke:0.45px currentColor">5</div>
<div style="left:1px;top:296px;width:13px;height:1px;background:#BDBDBD"></div>
<div class="t" style="left:2.5px;top:285.50px;font-size:10px;color:#444;font-weight:normal;font-family:'Liberation Sans',sans-serif;-webkit-text-stroke:0.45px currentColor">6</div>
<div style="left:1px;top:313px;width:13px;height:1px;background:#BDBDBD"></div>
<div class="t" style="left:2.5px;top:302.50px;font-size:10px;color:#444;font-weight:normal;font-family:'Liberation Sans',sans-serif;-webkit-text-stroke:0.45px currentColor">7</div>
<div style="left:1px;top:362px;width:13px;height:1px;background:#BDBDBD"></div>
<div class="t" style="left:2.5px;top:351.50px;font-size:10px;color:#444;font-weight:normal;font-family:'Liberation Sans',sans-serif;-webkit-text-stroke:0.45px currentColor">8</div>
<div style="left:1px;top:394px;width:13px;height:1px;background:#BDBDBD"></div>
<div class="t" style="left:2.5px;top:383.50px;font-size:10px;color:#444;font-weight:normal;font-family:'Liberation Sans',sans-serif;-webkit-text-stroke:0.45px currentColor">9</div>
<div style="left:1px;top:425px;width:13px;height:1px;background:#BDBDBD"></div>
<div class="t" style="left:-0.5px;top:414.50px;font-size:10px;color:#444;font-weight:normal;font-family:'Liberation Sans',sans-serif;-webkit-text-stroke:0.45px currentColor">10</div>
<div style="left:1px;top:457px;width:13px;height:1px;background:#BDBDBD"></div>
<div class="t" style="left:-0.5px;top:446.50px;font-size:10px;color:#444;font-weight:normal;font-family:'Liberation Sans',sans-serif;-webkit-text-stroke:0.45px currentColor">11</div>
<div style="left:1px;top:472px;width:13px;height:1px;background:#BDBDBD"></div>
<div style="left:1px;top:458px;width:13px;height:14px;background:#D3D3D3"></div>
<div style="left:12px;top:458px;width:2px;height:14px;background:#217346"></div>
<div class="t" style="left:-0.5px;top:461.50px;font-size:10px;color:#217346;font-weight:normal;font-family:'Liberation Sans',sans-serif;-webkit-text-stroke:0.45px currentColor">12</div>
<div style="left:1px;top:488px;width:13px;height:1px;background:#BDBDBD"></div>
<div class="t" style="left:-0.5px;top:477.50px;font-size:10px;color:#444;font-weight:normal;font-family:'Liberation Sans',sans-serif;-webkit-text-stroke:0.45px currentColor">13</div>
<div style="left:1px;top:504px;width:13px;height:1px;background:#BDBDBD"></div>
<div class="t" style="left:-0.5px;top:493.50px;font-size:10px;color:#444;font-weight:normal;font-family:'Liberation Sans',sans-serif;-webkit-text-stroke:0.45px currentColor">14</div>
<div style="left:1px;top:519px;width:13px;height:1px;background:#BDBDBD"></div>
<div class="t" style="left:-0.5px;top:508.50px;font-size:10px;color:#444;font-weight:normal;font-family:'Liberation Sans',sans-serif;-webkit-text-stroke:0.45px currentColor">15</div>
<div style="left:1px;top:535px;width:13px;height:1px;background:#BDBDBD"></div>
<div class="t" style="left:-0.5px;top:524.50px;font-size:10px;color:#444;font-weight:normal;font-family:'Liberation Sans',sans-serif;-webkit-text-stroke:0.45px currentColor">16</div>
<div style="left:1px;top:551px;width:13px;height:1px;background:#BDBDBD"></div>
<div class="t" style="left:-0.5px;top:540.50px;font-size:10px;color:#444;font-weight:normal;font-family:'Liberation Sans',sans-serif;-webkit-text-stroke:0.45px currentColor">17</div>
<div style="left:1px;top:567px;width:13px;height:1px;background:#BDBDBD"></div>
<div class="t" style="left:-0.5px;top:556.50px;font-size:10px;color:#444;font-weight:normal;font-family:'Liberation Sans',sans-serif;-webkit-text-stroke:0.45px currentColor">18</div>
<div style="left:1px;top:582px;width:13px;height:1px;background:#BDBDBD"></div>
<div class="t" style="left:-0.5px;top:571.50px;font-size:10px;color:#444;font-weight:normal;font-family:'Liberation Sans',sans-serif;-webkit-text-stroke:0.45px currentColor">19</div>
<div style="left:1px;top:598px;width:13px;height:1px;background:#BDBDBD"></div>
<div class="t" style="left:-0.5px;top:587.50px;font-size:10px;color:#444;font-weight:normal;font-family:'Liberation Sans',sans-serif;-webkit-text-stroke:0.45px currentColor">20</div>
<div style="left:1px;top:614px;width:13px;height:1px;background:#BDBDBD"></div>
<div class="t" style="left:-0.5px;top:603.50px;font-size:10px;color:#444;font-weight:normal;font-family:'Liberation Sans',sans-serif;-webkit-text-stroke:0.45px currentColor">21</div>
<div style="left:1px;top:630px;width:13px;height:1px;background:#BDBDBD"></div>
<div class="t" style="left:-0.5px;top:619.50px;font-size:10px;color:#444;font-weight:normal;font-family:'Liberation Sans',sans-serif;-webkit-text-stroke:0.45px currentColor">22</div>
<div style="left:14px;top:194px;width:1px;height:427px;background:#BDBDBD"></div>
<div style="left:95px;top:296px;width:1392px;height:17px;background:#EBF1DE"></div>
<div style="left:95px;top:313px;width:1392px;height:49px;background:#EBF1DE"></div>
<div style="left:14px;top:313px;width:81px;height:49px;background:#CCEAFC"></div>
<div style="left:95px;top:296px;width:1392px;height:1px;background:#707070"></div>
<div style="left:14px;top:313px;width:1473px;height:1px;background:#3A3A3A"></div>
<div style="left:14px;top:362px;width:1473px;height:1px;background:#3A3A3A"></div>
<div style="left:95px;top:296px;width:1px;height:67px;background:#3A3A3A"></div>
<div style="left:192px;top:313px;width:1px;height:49px;background:#3A3A3A"></div>
<div style="left:261px;top:313px;width:1px;height:49px;background:#3A3A3A"></div>
<div style="left:364px;top:313px;width:1px;height:49px;background:#3A3A3A"></div>
<div style="left:461px;top:313px;width:1px;height:49px;background:#3A3A3A"></div>
<div style="left:540px;top:313px;width:1px;height:49px;background:#3A3A3A"></div>
<div style="left:618px;top:313px;width:1px;height:49px;background:#3A3A3A"></div>
<div style="left:706px;top:313px;width:1px;height:49px;background:#3A3A3A"></div>
<div style="left:795px;top:313px;width:1px;height:49px;background:#3A3A3A"></div>
<div style="left:865px;top:313px;width:1px;height:49px;background:#3A3A3A"></div>
<div style="left:938px;top:313px;width:1px;height:49px;background:#3A3A3A"></div>
<div style="left:1018px;top:313px;width:1px;height:49px;background:#3A3A3A"></div>
<div style="left:1099px;top:313px;width:1px;height:49px;background:#3A3A3A"></div>
<div style="left:1181px;top:313px;width:1px;height:49px;background:#3A3A3A"></div>
<div style="left:1261px;top:313px;width:1px;height:49px;background:#3A3A3A"></div>
<div style="left:1352px;top:313px;width:1px;height:49px;background:#3A3A3A"></div>
<div style="left:1434px;top:313px;width:1px;height:49px;background:#3A3A3A"></div>
<div class="t" style="left:-45.0px;width:200px;text-align:center;top:333.14px;font-size:12.2px;color:#000;font-weight:bold;font-family:'Liberation Serif',serif;-webkit-text-stroke:0;">Tỷ giá</div>
<div class="t" style="left:44.0px;width:200px;text-align:center;top:333.14px;font-size:12.2px;color:#000;font-weight:bold;font-family:'Liberation Serif',serif;-webkit-text-stroke:0;">Mã hàng (*)</div>
<div class="t" style="left:127.0px;width:200px;text-align:center;top:324.54px;font-size:12.2px;color:#000;font-weight:bold;font-family:'Liberation Serif',serif;-webkit-text-stroke:0;">Thuộc</div>
<div class="t" style="left:127.0px;width:200px;text-align:center;top:341.04px;font-size:12.2px;color:#000;font-weight:bold;font-family:'Liberation Serif',serif;-webkit-text-stroke:0;">combo</div>
<div class="t" style="left:213.0px;width:200px;text-align:center;top:333.14px;font-size:12.2px;color:#000;font-weight:bold;font-family:'Liberation Serif',serif;-webkit-text-stroke:0;">Tên hàng</div>
<div class="t" style="left:313.0px;width:200px;text-align:center;top:333.14px;font-size:12.2px;color:#000;font-weight:bold;font-family:'Liberation Serif',serif;-webkit-text-stroke:0;">Là dòng ghi chú</div>
<div class="t" style="left:401.0px;width:200px;text-align:center;top:324.54px;font-size:12.2px;color:#000;font-weight:bold;font-family:'Liberation Serif',serif;-webkit-text-stroke:0;">Hàng khuyến</div>
<div class="t" style="left:401.0px;width:200px;text-align:center;top:341.04px;font-size:12.2px;color:#000;font-weight:bold;font-family:'Liberation Serif',serif;-webkit-text-stroke:0;">mại</div>
<div class="t" style="left:479.5px;width:200px;text-align:center;top:324.54px;font-size:12.2px;color:#000;font-weight:bold;font-family:'Liberation Serif',serif;-webkit-text-stroke:0;">Chiết khấu</div>
<div class="t" style="left:479.5px;width:200px;text-align:center;top:341.04px;font-size:12.2px;color:#000;font-weight:bold;font-family:'Liberation Serif',serif;-webkit-text-stroke:0;">thương mại</div>
<div class="t" style="left:562.5px;width:200px;text-align:center;top:324.54px;font-size:12.2px;color:#000;font-weight:bold;font-family:'Liberation Serif',serif;-webkit-text-stroke:0;">TK Tiền/Chi</div>
<div class="t" style="left:562.5px;width:200px;text-align:center;top:341.04px;font-size:12.2px;color:#000;font-weight:bold;font-family:'Liberation Serif',serif;-webkit-text-stroke:0;">phí/Nợ (*)</div>
<div class="t" style="left:651.0px;width:200px;text-align:center;top:324.54px;font-size:12.2px;color:#000;font-weight:bold;font-family:'Liberation Serif',serif;-webkit-text-stroke:0;">TK Doanh</div>
<div class="t" style="left:651.0px;width:200px;text-align:center;top:341.04px;font-size:12.2px;color:#000;font-weight:bold;font-family:'Liberation Serif',serif;-webkit-text-stroke:0;">thu/Có (*)</div>
<div class="t" style="left:730.5px;width:200px;text-align:center;top:333.14px;font-size:12.2px;color:#000;font-weight:bold;font-family:'Liberation Serif',serif;-webkit-text-stroke:0;">ĐVT</div>
<div class="t" style="left:802.0px;width:200px;text-align:center;top:333.14px;font-size:12.2px;color:#000;font-weight:bold;font-family:'Liberation Serif',serif;-webkit-text-stroke:0;">Số lượng</div>
<div class="t" style="left:878.5px;width:200px;text-align:center;top:333.14px;font-size:12.2px;color:#000;font-weight:bold;font-family:'Liberation Serif',serif;-webkit-text-stroke:0;">Đơn giá</div>
<div class="t" style="left:959.0px;width:200px;text-align:center;top:333.14px;font-size:12.2px;color:#000;font-weight:bold;font-family:'Liberation Serif',serif;-webkit-text-stroke:0;">Thành tiền</div>
<div class="t" style="left:1040.5px;width:200px;text-align:center;top:324.54px;font-size:12.2px;color:#000;font-weight:bold;font-family:'Liberation Serif',serif;-webkit-text-stroke:0;">Thành tiền quy</div>
<div class="t" style="left:1040.5px;width:200px;text-align:center;top:341.04px;font-size:12.2px;color:#000;font-weight:bold;font-family:'Liberation Serif',serif;-webkit-text-stroke:0;">đổi</div>
<div class="t" style="left:1121.5px;width:200px;text-align:center;top:333.14px;font-size:12.2px;color:#000;font-weight:bold;font-family:'Liberation Serif',serif;-webkit-text-stroke:0;">Tỷ lệ CK (%)</div>
<div class="t" style="left:1207.0px;width:200px;text-align:center;top:333.14px;font-size:12.2px;color:#000;font-weight:bold;font-family:'Liberation Serif',serif;-webkit-text-stroke:0;">Tiền chiết khấu</div>
<div class="t" style="left:1293.5px;width:200px;text-align:center;top:324.54px;font-size:12.2px;color:#000;font-weight:bold;font-family:'Liberation Serif',serif;-webkit-text-stroke:0;">Tiền chiết</div>
<div class="t" style="left:1293.5px;width:200px;text-align:center;top:341.04px;font-size:12.2px;color:#000;font-weight:bold;font-family:'Liberation Serif',serif;-webkit-text-stroke:0;">khấu quy đổi</div>
<div class="t" style="left:1440px;top:333.14px;font-size:12.2px;color:#000;font-weight:bold;font-family:'Liberation Serif',serif;-webkit-text-stroke:0;">TK chiết</div>
<div class="t" style="left:98px;top:374.05px;font-size:10.5px;color:#222;font-weight:normal;font-family:'Liberation Sans',sans-serif;">1259combo</div>
<div class="t" style="left:367px;top:374.05px;font-size:10.5px;color:#222;font-weight:normal;font-family:'Liberation Sans',sans-serif;">không</div>
<div class="t" style="left:464px;top:374.05px;font-size:10.5px;color:#222;font-weight:normal;font-family:'Liberation Sans',sans-serif;">Không</div>
<div class="t" style="left:621px;top:374.05px;font-size:10.5px;color:#222;font-weight:normal;font-family:'Liberation Sans',sans-serif;">131</div>
<div class="t" style="left:709px;top:374.05px;font-size:10.5px;color:#222;font-weight:normal;font-family:'Liberation Sans',sans-serif;">5111</div>
<div class="t" style="left:736px;width:200px;text-align:right;top:374.40px;font-size:10px;color:#222">2</div>
<div class="t" style="left:979px;width:200px;text-align:right;top:374.40px;font-size:10px;color:#222">0</div>
<div class="t" style="left:1150px;width:200px;text-align:right;top:374.40px;font-size:10px;color:#222">0</div>
<div class="t" style="left:1232px;width:200px;text-align:right;top:374.40px;font-size:10px;color:#222">0</div>
<div class="t" style="left:1437px;top:374.05px;font-size:10.5px;color:#222;font-weight:normal;font-family:'Liberation Sans',sans-serif;">5211</div>
<div class="t" style="left:98px;top:405.55px;font-size:10.5px;color:#222;font-weight:normal;font-family:'Liberation Sans',sans-serif;">A</div>
<div class="t" style="left:195px;top:405.55px;font-size:10.5px;color:#222;font-weight:normal;font-family:'Liberation Sans',sans-serif;">1259combo</div>
<div class="t" style="left:367px;top:405.55px;font-size:10.5px;color:#222;font-weight:normal;font-family:'Liberation Sans',sans-serif;">không</div>
<div class="t" style="left:464px;top:405.55px;font-size:10.5px;color:#222;font-weight:normal;font-family:'Liberation Sans',sans-serif;">Không</div>
<div class="t" style="left:621px;top:405.55px;font-size:10.5px;color:#222;font-weight:normal;font-family:'Liberation Sans',sans-serif;">131</div>
<div class="t" style="left:709px;top:405.55px;font-size:10.5px;color:#222;font-weight:normal;font-family:'Liberation Sans',sans-serif;">5111</div>
<div class="t" style="left:736px;width:200px;text-align:right;top:405.90px;font-size:10px;color:#222">2</div>
<div class="t" style="left:816px;width:200px;text-align:right;top:405.90px;font-size:10px;color:#222">600,000</div>
<div class="t" style="left:897px;width:200px;text-align:right;top:405.90px;font-size:10px;color:#222">1,200,000</div>
<div class="t" style="left:979px;width:200px;text-align:right;top:405.90px;font-size:10px;color:#222">0</div>
<div class="t" style="left:1150px;width:200px;text-align:right;top:405.90px;font-size:10px;color:#222">0</div>
<div class="t" style="left:1232px;width:200px;text-align:right;top:405.90px;font-size:10px;color:#222">0</div>
<div class="t" style="left:1437px;top:405.55px;font-size:10.5px;color:#222;font-weight:normal;font-family:'Liberation Sans',sans-serif;">5211</div>
<div class="t" style="left:98px;top:437.05px;font-size:10.5px;color:#222;font-weight:normal;font-family:'Liberation Sans',sans-serif;">A1</div>
<div class="t" style="left:195px;top:437.05px;font-size:10.5px;color:#222;font-weight:normal;font-family:'Liberation Sans',sans-serif;">1259combo</div>
<div class="t" style="left:367px;top:437.05px;font-size:10.5px;color:#222;font-weight:normal;font-family:'Liberation Sans',sans-serif;">không</div>
<div class="t" style="left:464px;top:437.05px;font-size:10.5px;color:#222;font-weight:normal;font-family:'Liberation Sans',sans-serif;">Không</div>
<div class="t" style="left:621px;top:437.05px;font-size:10.5px;color:#222;font-weight:normal;font-family:'Liberation Sans',sans-serif;">131</div>
<div class="t" style="left:709px;top:437.05px;font-size:10.5px;color:#222;font-weight:normal;font-family:'Liberation Sans',sans-serif;">5111</div>
<div class="t" style="left:736px;width:200px;text-align:right;top:437.40px;font-size:10px;color:#222">2</div>
<div class="t" style="left:816px;width:200px;text-align:right;top:437.40px;font-size:10px;color:#222">400,000</div>
<div class="t" style="left:897px;width:200px;text-align:right;top:437.40px;font-size:10px;color:#222">800,000</div>
<div class="t" style="left:979px;width:200px;text-align:right;top:437.40px;font-size:10px;color:#222">0</div>
<div class="t" style="left:1150px;width:200px;text-align:right;top:437.40px;font-size:10px;color:#222">0</div>
<div class="t" style="left:1232px;width:200px;text-align:right;top:437.40px;font-size:10px;color:#222">0</div>
<div class="t" style="left:1437px;top:437.05px;font-size:10.5px;color:#222;font-weight:normal;font-family:'Liberation Sans',sans-serif;">5211</div>
<div style="left:1018px;top:456px;width:82px;height:18px;border:2px solid #217346"></div>
<div style="left:1097px;top:470px;width:5px;height:5px;background:#217346;border:1px solid #fff"></div>
<div style="left:95px;top:362px;width:1006px;height:95px;border:2px solid #E8403F;box-shadow:0 0 0 0.8px rgba(232,64,63,0.55), 1px 2px 3px rgba(0,0,0,0.3), inset 0 0 0 0.6px rgba(232,64,63,0.5), inset 1px 2px 3px rgba(0,0,0,0.2)"></div>
<svg style="left:619px;top:363px;" width="5" height="5" viewBox="0 0 5 5"><path d="M0 0 H5 L0 5 Z" fill="#1E8A3E"/></svg>
<svg style="left:707px;top:363px;" width="5" height="5" viewBox="0 0 5 5"><path d="M0 0 H5 L0 5 Z" fill="#1E8A3E"/></svg>
<svg style="left:1435px;top:363px;" width="5" height="5" viewBox="0 0 5 5"><path d="M0 0 H5 L0 5 Z" fill="#1E8A3E"/></svg>
<svg style="left:619px;top:395px;" width="5" height="5" viewBox="0 0 5 5"><path d="M0 0 H5 L0 5 Z" fill="#1E8A3E"/></svg>
<svg style="left:707px;top:395px;" width="5" height="5" viewBox="0 0 5 5"><path d="M0 0 H5 L0 5 Z" fill="#1E8A3E"/></svg>
<svg style="left:1435px;top:395px;" width="5" height="5" viewBox="0 0 5 5"><path d="M0 0 H5 L0 5 Z" fill="#1E8A3E"/></svg>
<svg style="left:619px;top:426px;" width="5" height="5" viewBox="0 0 5 5"><path d="M0 0 H5 L0 5 Z" fill="#1E8A3E"/></svg>
<svg style="left:707px;top:426px;" width="5" height="5" viewBox="0 0 5 5"><path d="M0 0 H5 L0 5 Z" fill="#1E8A3E"/></svg>
<svg style="left:1435px;top:426px;" width="5" height="5" viewBox="0 0 5 5"><path d="M0 0 H5 L0 5 Z" fill="#1E8A3E"/></svg>
<div style="left:1487px;top:169px;width:10px;height:452px;background:#E6E6E6"></div>
<div style="left:1489px;top:180.5px;width:8px;height:10.5px;background:#fff;border:1px solid #ABABAB"></div>
<svg style="left:1490.5px;top:183.5px;" width="6" height="4" viewBox="0 0 6 4"><path d="M0 4 L3 0 L6 4 Z" fill="#333"/></svg>
<div style="left:1489px;top:191px;width:8px;height:13px;background:#fff;border:1px solid #ABABAB"></div>
<div style="left:1487px;top:204px;width:10px;height:417px;background:#F0F0F0"></div>
<div style="left:0;top:0;width:1499px;height:1px;background:#000"></div>
<div style="left:0;top:620px;width:1499px;height:1px;background:#000"></div>
<div style="left:0;top:619px;width:1499px;height:1px;background:rgba(0,0,0,0.6)"></div>
<div style="left:0;top:0;width:1px;height:621px;background:#000"></div>
<div style="left:1498px;top:0;width:1px;height:621px;background:#000"></div>
<div style="left:1497px;top:0;width:1px;height:621px;background:rgba(0,0,0,0.5)"></div>
</body></html>
